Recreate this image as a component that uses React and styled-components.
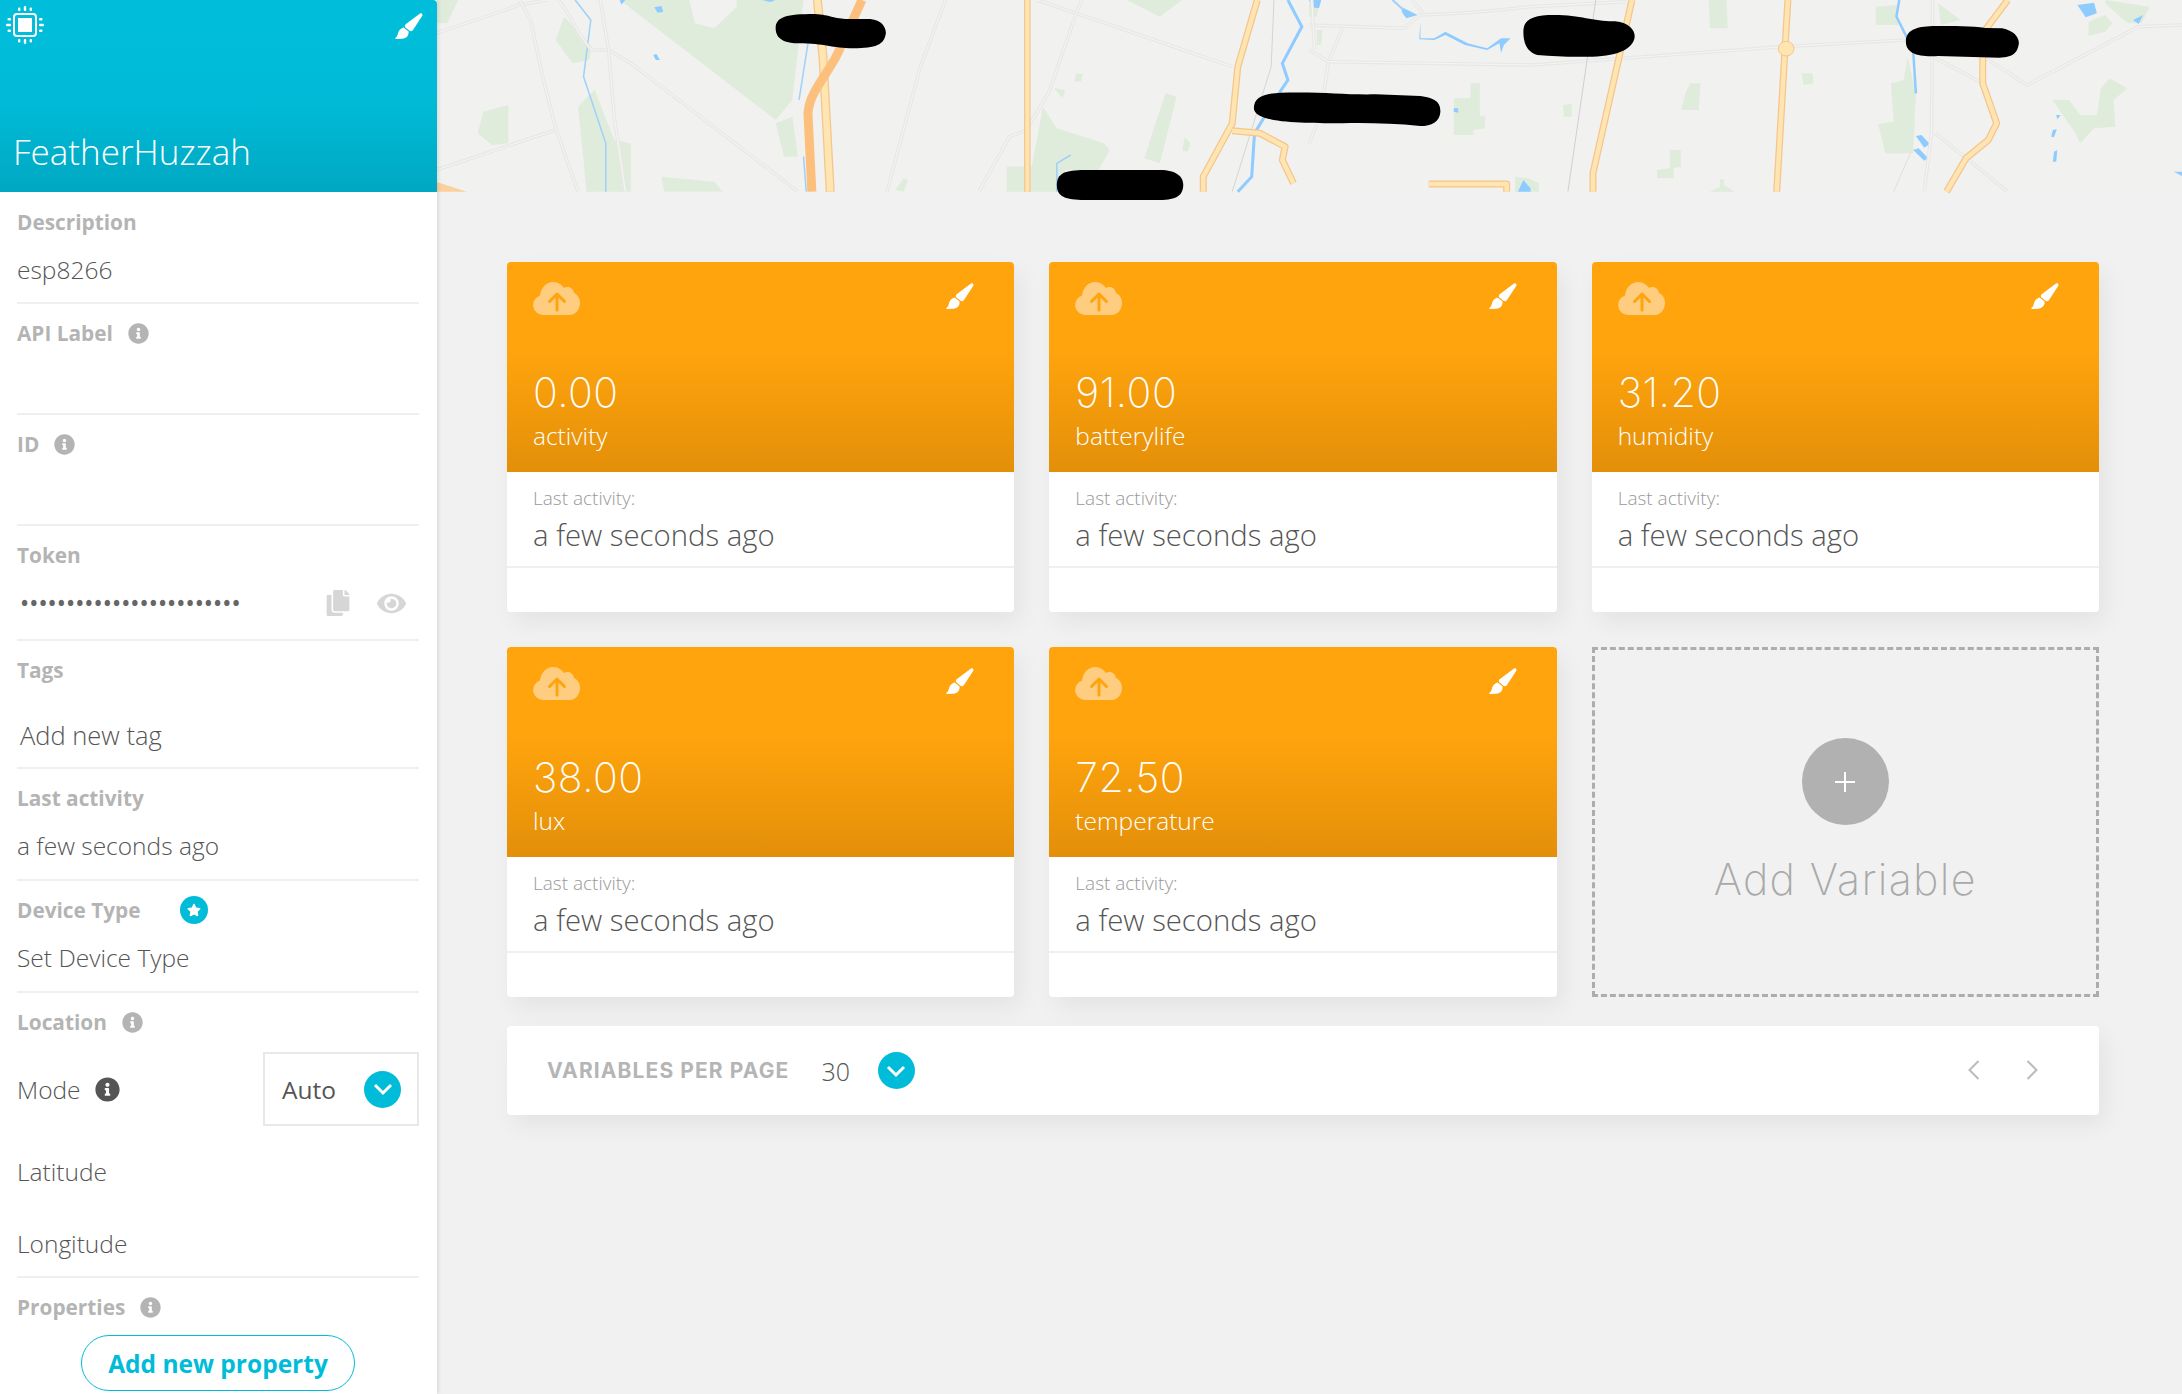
import React from 'react';
import styled, { createGlobalStyle } from 'styled-components';
import { FaInfoCircle, FaStar, FaCopy, FaEye } from 'react-icons/fa';

const GlobalStyle = createGlobalStyle`
  html, body { margin: 0; padding: 0; height: 100%; background: #f1f1f1; }
  body { font-family: "Open Sans", "Liberation Sans", sans-serif; color: #555; }
  * { box-sizing: border-box; }
`;

const Page = styled.div`
  display: flex;
  width: 2182px;
  height: 1394px;
  overflow: hidden;
  background: #f1f1f1;
`;

const Sidebar = styled.aside`
  flex: 0 0 437px;
  height: 100%;
  background: #fff;
  box-shadow: 1px 0 4px rgba(0, 0, 0, 0.12);
  z-index: 2;
  display: flex;
  flex-direction: column;
`;

const DeviceHeader = styled.header`
  flex: 0 0 192px;
  padding: 6px 14px 0 6px;
  border-top-right-radius: 4px;
  background: linear-gradient(to bottom, #00bedb 0%, #00bad6 55%, #00a8c2 100%);
  display: flex;
  flex-direction: column;
  color: #fff;
`;

const HeaderIcons = styled.div`
  display: flex;
  justify-content: space-between;
  align-items: flex-start;
`;

const BrushSvg = styled.svg`
  display: block;
  margin-top: ${(p) => p.$top || 0}px;
`;

const DeviceName = styled.h1`
  margin: auto 0 17px 7px;
  font-size: 35px;
  line-height: 46px;
  font-weight: 300;
`;

const SideBody = styled.div`
  padding: 1px 18px 0 17px;
`;

const Section = styled.section`
  height: ${(p) => p.$h}px;
  padding-top: 15px;
  border-bottom: ${(p) => (p.$last ? 'none' : '2px solid #efefef')};
`;

const LabelRow = styled.div`
  display: flex;
  align-items: center;
  gap: ${(p) => p.$gap || 15}px;
  height: 28px;
`;

const Label = styled.span`
  font-size: 20.8px;
  font-weight: 700;
  color: #b4b4b4;
`;

const Info = styled(FaInfoCircle)`
  font-size: ${(p) => p.$size || 21}px;
  color: ${(p) => p.$color || '#b4b4b4'};
`;

const StarBadge = styled.span`
  width: 28px;
  height: 28px;
  margin-left: 24px;
  border-radius: 50%;
  background: #00bcd8;
  display: flex;
  align-items: center;
  justify-content: center;
  color: #fff;
  font-size: 14px;
`;

const Value = styled.div`
  margin-top: ${(p) => p.$top || 14}px;
  margin-left: ${(p) => p.$left || 0}px;
  font-size: ${(p) => p.$size || 24.5}px;
  line-height: 40px;
  font-weight: 300;
  color: #555;
`;

const TokenRow = styled.div`
  display: flex;
  align-items: center;
  margin-top: 14px;
  height: 40px;
`;

const Dots = styled.span`
  margin-left: 4px;
  font-size: 19px;
  font-weight: 700;
  letter-spacing: 2.05px;
  color: #666;
  flex: 1;
`;

const TokenIcon = styled.span`
  display: flex;
  color: #d6d6d6;
  font-size: ${(p) => p.$size}px;
  margin-right: ${(p) => p.$right}px;
`;

const ModeRow = styled.div`
  display: flex;
  align-items: center;
  justify-content: space-between;
  margin-top: 16px;
`;

const ModeLabel = styled.div`
  display: flex;
  align-items: center;
  gap: 14px;
  font-size: 24.5px;
  font-weight: 300;
`;

const ModeSelect = styled.div`
  width: 156px;
  height: 74px;
  border: 2px solid #e8e8e8;
  padding: 0 16px 0 17px;
  display: flex;
  align-items: center;
  justify-content: space-between;
  font-size: 24.5px;
  color: #555;
`;

const Chevron = styled.span`
  width: 37px;
  height: 37px;
  border-radius: 50%;
  background: #00bcd8;
  display: flex;
  align-items: center;
  justify-content: center;
`;

const Coord = styled.div`
  margin-top: ${(p) => p.$top}px;
  font-size: 24.5px;
  line-height: 68px;
  font-weight: 300;
`;

const AddProperty = styled.button`
  display: block;
  width: 274px;
  height: 56px;
  margin: 14px 0 0 64px;
  border: 1.5px solid #00bcd8;
  border-radius: 28px;
  background: #fff;
  color: #00bcd8;
  font-family: inherit;
  font-size: 24.5px;
  font-weight: 700;
  padding: 0;
`;

const Main = styled.main`
  flex: 1;
  min-width: 0;
  display: flex;
  flex-direction: column;
`;

const MapBox = styled.div`
  height: 192px;
  background: #f1f1f0;
`;

const MapSvg = styled.svg`
  display: block;
  overflow: visible;
  width: 1745px;
  height: 192px;
`;

const Content = styled.div`
  padding: 70px 83px 0 70px;
`;

const Grid = styled.div`
  display: grid;
  grid-template-columns: repeat(3, 1fr);
  grid-auto-rows: 350px;
  gap: 35px;
`;

const Card = styled.article`
  border-radius: 4px;
  background: #fff;
  overflow: hidden;
  box-shadow: 6px 10px 24px rgba(0, 0, 0, 0.06);
  display: flex;
  flex-direction: column;
`;

const CardHead = styled.div`
  height: 210px;
  padding: 20px 40px 0 26px;
  background: linear-gradient(to bottom, #ffa40d 0%, #ffa40d 42%, #e38f09 100%);
  color: #fff;
`;

const CardIcons = styled.div`
  display: flex;
  justify-content: space-between;
  align-items: flex-start;
  height: 80px;
`;

const Reading = styled.div`
  font-family: Inter, "Open Sans", sans-serif;
  font-size: 41px;
  line-height: 50px;
  font-weight: 200;
  letter-spacing: 0.5px;
  margin-top: 5px;
`;

const VarName = styled.div`
  font-size: 24.5px;
  line-height: 34px;
  font-weight: 300;
  margin-top: 2px;
`;

const CardBody = styled.div`
  height: 96px;
  padding: 13px 26px 0;
  border-bottom: 2px solid #efefef;
`;

const ActivityLabel = styled.div`
  font-size: 19px;
  line-height: 27px;
  font-weight: 300;
  color: #999;
`;

const ActivityValue = styled.div`
  margin-top: 3px;
  font-size: 29.3px;
  line-height: 40px;
  font-weight: 300;
  color: #555;
`;

const AddCard = styled.div`
  border: 3px dashed #adadad;
  display: flex;
  flex-direction: column;
  align-items: center;
  padding-top: 88px;
`;

const AddCircle = styled.div`
  width: 87px;
  height: 87px;
  border-radius: 50%;
  background: #b1b1b1;
  color: #fff;
  display: flex;
  align-items: center;
  justify-content: center;
`;

const AddLabel = styled.div`
  margin-top: 28px;
  font-family: Inter, "Open Sans", sans-serif;
  font-size: 43px;
  line-height: 52px;
  font-weight: 200;
  letter-spacing: 1.3px;
  color: #a9a9a9;
`;

const Pager = styled.div`
  height: 89px;
  margin-top: 29px;
  padding: 0 61px 0 40px;
  border-radius: 4px;
  background: #fff;
  box-shadow: 6px 10px 24px rgba(0, 0, 0, 0.06);
  display: flex;
  align-items: center;
`;

const PagerLabel = styled.span`
  font-family: Inter, "Open Sans", sans-serif;
  font-size: 21px;
  font-weight: 700;
  letter-spacing: 1.1px;
  color: #b5b5b5;
`;

const PagerValue = styled.span`
  margin: 0 28px 0 32px;
  font-size: 25px;
  font-weight: 300;
  color: #555;
`;

const PagerArrows = styled.div`
  margin-left: auto;
  display: flex;
  gap: 46px;
  margin-top: -2px;
`;

const BrushIcon = ({ top }) => (
  <BrushSvg $top={top} width="28" height="26" viewBox="0 0 28 26" fill="#fff">
    <path d="M25 .5c1.5-.8 3 .6 2.3 2.2L18 17c-1 1.4-2.5 1.5-3.5.7l-4-3.2c-1-.9-.9-2.3.2-3.3z" />
    <path d="M8.6 14.4l5 4c.3 3.8-2 7-6.5 7.4L1 26c-.8 0-1-.8-.5-1.2 2-1.2 2-3 2.7-5.3.8-2.7 3-4.6 5.4-5.1z" />
  </BrushSvg>
);

const CloudIcon = () => (
  <svg width="47" height="33" viewBox="0 0 47 33">
    <path fill="#ffcd80" d="M10 33a10 10 0 0 1-3-19.5C8 5 14 0 20 0c5 0 9 3 11 6 3-2 9-1 10 5 4 2 6 6 6 10 0 7-5 12-10 12z" />
    <path d="M24 28V13M16.5 19.5L24 12l7.5 7.5" fill="none" stroke="#ffa40d" strokeWidth="3" strokeLinecap="round" strokeLinejoin="round" />
  </svg>
);

const ChevronMark = () => (
  <svg width="20" height="14" viewBox="0 0 20 14">
    <path d="M2 3l8 8 8-8" fill="none" stroke="#fff" strokeWidth="3" />
  </svg>
);

const ChipIcon = () => (
  <svg width="38" height="38" viewBox="0 0 38 38" fill="#fff">
    <path fillRule="evenodd" d="M11 7h16a4 4 0 0 1 4 4v16a4 4 0 0 1-4 4H11a4 4 0 0 1-4-4V11a4 4 0 0 1 4-4zm0 2a2 2 0 0 0-2 2v16a2 2 0 0 0 2 2h16a2 2 0 0 0 2-2V11a2 2 0 0 0-2-2z" />
    <rect x="12" y="12" width="14" height="14" />
    <rect x="12" y="1.5" width="2.4" height="3.5" rx="1" />
    <rect x="17.8" y="0" width="2.4" height="5" rx="1" />
    <rect x="23.6" y="1.5" width="2.4" height="3.5" rx="1" />
    <rect x="12" y="33" width="2.4" height="3.5" rx="1" />
    <rect x="17.8" y="33" width="2.4" height="5" rx="1" />
    <rect x="23.6" y="33" width="2.4" height="3.5" rx="1" />
    <rect x="1.5" y="12" width="3.5" height="2.4" rx="1" />
    <rect x="0" y="17.8" width="5" height="2.4" rx="1" />
    <rect x="1.5" y="23.6" width="3.5" height="2.4" rx="1" />
    <rect x="33" y="12" width="3.5" height="2.4" rx="1" />
    <rect x="33" y="17.8" width="5" height="2.4" rx="1" />
    <rect x="33" y="23.6" width="3.5" height="2.4" rx="1" />
  </svg>
);

const Arrow = ({ flip }) => (
  <svg width="12" height="20" viewBox="0 0 12 20">
    <path d={flip ? 'M1.5 1l9 9-9 9' : 'M10.5 1l-9 9 9 9'} fill="none" stroke="#bbb" strokeWidth="2" />
  </svg>
);

const Road = ({ d }) => (
  <g fill="none" strokeLinejoin="round">
    <path d={d} stroke="#e7e7e6" strokeWidth="3.5" vectorEffect="non-scaling-stroke" />
    <path d={d} stroke="#f4f4f3" strokeWidth="1.2" vectorEffect="non-scaling-stroke" />
  </g>
);

const Highway = ({ d, w = 7 }) => (
  <g fill="none" strokeLinejoin="round">
    <path d={d} stroke="#f6c48d" strokeWidth={w} vectorEffect="non-scaling-stroke" />
    <path d={d} stroke="#ffe5b0" strokeWidth={w - 2.5} vectorEffect="non-scaling-stroke" />
  </g>
);

const Thin = ({ d, color = '#9fd0fa', w = 1.5 }) => (
  <path d={d} fill="none" stroke={color} strokeWidth={w} vectorEffect="non-scaling-stroke" />
);

// coordinates below were read off the two map crops, hence the scaled groups
const MapDrawing = () => (
  <MapSvg viewBox="437 0 1745 192">
    <g transform="translate(436 0) scale(0.5568 0.3333)">
      <g fill="#e0ecdb">
        <path d="M330 0L455 0L465 70L500 85L540 20L540 0L660 0L640 300L610 360Z" />
        <path d="M610 370L640 350L650 470L625 470Z" />
        <path d="M215 120L230 50L280 140L275 180L245 190Z" />
        <path d="M255 320L285 270L320 420L350 430L350 575L270 575L265 480Z" />
        <path d="M85 335L130 315L130 430L100 435L75 400Z" />
        <path d="M405 530L500 545L515 575L410 575Z" />
        <path d="M1090 320L1115 385L1200 430L1210 450L1190 510L1130 510L1120 575L1025 575L1025 500L1070 500Z" />
        <path d="M1110 265L1130 270L1125 295ZM1150 220L1162 222L1158 245L1146 243Z" />
        <path d="M1310 280L1330 290L1300 490L1272 475ZM1345 410L1355 430L1350 455L1340 450Z" />
        <path d="M0 0L40 0L20 70L0 70ZM1240 0L1340 0L1300 50ZM825 570L840 535L848 540L840 575Z" />
      </g>
      <path d="M0 545L55 575L0 575Z" fill="#fbd09c" />
      <g fill="#8ecbff">
        <path d="M392 22L405 18L408 35L398 38ZM390 165L396 162L402 180L395 180ZM330 0L340 0L333 14ZM585 0L610 0L600 6Z" />
      </g>
      <Thin d="M250 0L278 60L265 230L305 430L305 575" />
      <Thin d="M668 130L652 300M660 470L665 575M1140 465L1115 490L1115 575" />
      <Thin d="M1530 0L1555 80L1520 190L1530 240L1510 290L1470 400L1465 530L1440 575" w="3" color="#8ecbff" />
      <Road d="M0 100L150 15L200 0" />
      <Road d="M150 0L170 60L190 220L215 385L255 575" />
      <Road d="M220 0C240 40 260 120 280 150L310 150L350 190L650 575" />
      <Road d="M295 0L310 150L320 350L340 575" />
      <Road d="M0 510L215 390" />
      <Road d="M915 0L870 200L810 575" />
      <Road d="M1080 0L1430 200" />
      <Road d="M1160 0L1150 40L1100 280L1060 390L1030 410L975 575" />
      <Thin d="M1505 0L1500 200L1430 575" color="#d4d4d4" w="1" />
      <Highway d="M685 0L695 170L708 575" w="9" />
      <path d="M765 0L720 165C700 230 670 280 668 340L675 575" fill="none" stroke="#fcc07c" strokeWidth="9" vectorEffect="non-scaling-stroke" />
      <Highway d="M1062 0L1062 575" w="6.5" />
      <Highway d="M1475 0L1440 200L1430 370L1378 530L1378 575" w="7" />
      <Highway d="M1430 392L1480 400L1525 440L1520 480L1540 550" w="7" />
    </g>
    <g transform="translate(1309 0) scale(0.5568 0.3333)">
      <g fill="#e0ecdb">
        <path d="M718 0L750 0L752 85L720 85ZM1018 20L1055 15L1058 75L1018 75ZM1130 10L1170 60L1135 75Z" />
        <path d="M260 295L290 295L290 250L307 250L307 348L317 350L315 385L295 390L295 405L260 405Z" />
        <path d="M456 315L472 312L472 350L458 350ZM885 220L905 220L906 252L888 254Z" />
        <path d="M685 250L703 250L700 330L668 330L677 275Z" />
        <path d="M648 450L668 450L668 500L655 505L655 535L625 535L625 510L648 505Z" />
        <path d="M738 538L745 538L745 555L765 575L720 575L738 560Z" />
        <path d="M1045 250L1068 240L1075 170L1090 280L1085 460L1035 460L1022 372L1050 365Z" />
        <path d="M1335 300L1365 300L1385 345L1415 345L1422 265L1438 235L1470 265L1445 300L1448 380L1410 385L1385 430L1375 395Z" />
        <path d="M1430 0L1510 20L1495 70L1470 70L1430 10ZM1400 65L1430 45L1443 70L1430 95L1400 108Z" />
        <path d="M370 530L395 535L413 550L413 575L370 575ZM0 10L18 10L14 50L0 50ZM14 90L24 90L22 135L14 135Z" />
      </g>
      <g fill="#8ecbff">
        <path d="M165 20L195 45L175 55L168 40ZM0 0L22 0L18 25L5 22Z" />
        <path d="M200 62L200 115L225 115L245 95L285 130L320 145L345 115L362 115L350 135L345 158L342 130L320 150L280 135L245 105L225 120L198 118Z" />
        <path d="M1380 15L1410 8L1415 40L1395 52ZM1480 60L1498 45L1490 72ZM1090 408L1100 405L1115 432L1105 443ZM1085 450L1095 445L1112 475L1105 482Z" />
        <path d="M1342 345L1350 345L1344 358ZM1336 390L1343 388L1338 412L1333 410ZM1338 455L1344 450L1342 485L1336 485Z" />
        <path d="M375 575L385 540L398 565L398 575ZM260 325L268 325L268 338L260 335ZM1553 515L1568 515L1568 528Z" />
      </g>
      <Thin d="M150 0L170 30" w="2" />
      <Thin d="M1060 0L1055 50L1085 150L1090 280" w="2.5" color="#8ecbff" />
      <Road d="M0 75L170 85L200 45C300 40 340 30 400 20L570 5" />
      <Road d="M185 0L205 40" />
      <Road d="M60 85L35 185L20 350L0 430" />
      <Road d="M35 185L0 150M5 0L10 150" />
      <Road d="M35 185L400 195L850 140L1070 120" />
      <Road d="M1120 170L1210 250" />
      <Road d="M1210 170L1290 255L1490 80L1568 75" />
      <Road d="M1125 400L1255 575" />
      <Road d="M1120 0L1118 400L1105 575" />
      <Thin d="M515 0L465 575" color="#cfcfcf" w="1" />
      <Thin d="M1080 460L1050 575" color="#dfdfdf" w="1" />
      <Highway d="M580 0L510 520L510 575" w="7" />
      <Highway d="M860 0L840 575" w="7" />
      <ellipse cx="857" cy="146" rx="14" ry="22" fill="#ffe5b0" stroke="#f6c48d" strokeWidth="1" vectorEffect="non-scaling-stroke" />
      <Highway d="M1255 0L1210 100L1210 250L1235 370L1220 420L1180 475L1145 575" w="7" />
      <Highway d="M215 552L355 552L355 575" w="7" />
    </g>
    {/* redaction scribbles from the screenshot */}
    <g fill="#000">
      <path transform="translate(436 0) scale(0.5568 0.3333)" d="M610 85C610 50 630 42 680 42C710 45 715 57 740 57L780 57C800 60 808 80 808 100C805 135 790 145 750 145C710 145 700 130 650 130C620 130 610 110 610 85Z" />
      <path transform="translate(436 0) scale(0.5568 0.3333)" d="M1115 555C1115 520 1130 510 1165 510L1300 510C1330 510 1342 530 1342 555C1342 585 1330 600 1300 600L1165 600C1130 600 1115 590 1115 555Z" />
      <path transform="translate(1309 0) scale(0.5568 0.3333)" d="M-99 325C-99 290 -80 280 -50 278C30 275 60 285 120 283L200 288C230 295 236 310 236 335C235 365 220 378 200 378C150 370 100 368 60 370C0 368 -99 372 -99 325Z" />
      <path transform="translate(1309 0) scale(0.5568 0.3333)" d="M385 95C385 55 405 45 440 45C490 45 510 65 550 64C575 68 585 90 585 110C582 150 550 170 500 170C470 172 440 168 410 165C390 155 385 125 385 95Z" />
      <path transform="translate(1309 0) scale(0.5568 0.3333)" d="M1072 125C1072 90 1090 80 1120 78C1160 78 1190 78 1215 84L1245 85C1265 92 1275 110 1275 130C1272 160 1265 172 1240 173L1130 168C1095 172 1072 160 1072 125Z" />
    </g>
  </MapSvg>
);

const variables = [
  { value: '0.00', name: 'activity' },
  { value: '91.00', name: 'batterylife' },
  { value: '31.20', name: 'humidity' },
  { value: '38.00', name: 'lux' },
  { value: '72.50', name: 'temperature' }
];

const VariableCard = ({ value, name }) => (
  <Card>
    <CardHead>
      <CardIcons>
        <CloudIcon />
        <BrushIcon top={1} />
      </CardIcons>
      <Reading>{value}</Reading>
      <VarName>{name}</VarName>
    </CardHead>
    <CardBody>
      <ActivityLabel>Last activity:</ActivityLabel>
      <ActivityValue>a few seconds ago</ActivityValue>
    </CardBody>
  </Card>
);

export default function App() {
  return (
    <Page>
      <GlobalStyle />
      <Sidebar>
        <DeviceHeader>
          <HeaderIcons>
            <ChipIcon />
            <BrushIcon top={7} />
          </HeaderIcons>
          <DeviceName>FeatherHuzzah</DeviceName>
        </DeviceHeader>
        <SideBody>
          <Section $h={111}>
            <LabelRow><Label>Description</Label></LabelRow>
            <Value>esp8266</Value>
          </Section>
          <Section $h={111}>
            <LabelRow><Label>API Label</Label><Info /></LabelRow>
          </Section>
          <Section $h={111}>
            <LabelRow><Label>ID</Label><Info /></LabelRow>
          </Section>
          <Section $h={115}>
            <LabelRow><Label>Token</Label></LabelRow>
            <TokenRow>
              <Dots>••••••••••••••••••••••••</Dots>
              <TokenIcon $size={26} $right={26}><FaCopy /></TokenIcon>
              <TokenIcon $size={29} $right={13}><FaEye /></TokenIcon>
            </TokenRow>
          </Section>
          <Section $h={128}>
            <LabelRow><Label>Tags</Label></LabelRow>
            <Value $top={31} $left={3} $size={25.5}>Add new tag</Value>
          </Section>
          <Section $h={112}>
            <LabelRow><Label>Last activity</Label></LabelRow>
            <Value>a few seconds ago</Value>
          </Section>
          <Section $h={112}>
            <LabelRow $gap={0}><Label>Device Type</Label><StarBadge><FaStar /></StarBadge></LabelRow>
            <Value>Set Device Type</Value>
          </Section>
          <Section $h={285}>
            <LabelRow><Label>Location</Label><Info /></LabelRow>
            <ModeRow>
              <ModeLabel>Mode<Info $size={25} $color="#555" /></ModeLabel>
              <ModeSelect>Auto<Chevron><ChevronMark /></Chevron></ModeSelect>
            </ModeRow>
            <Coord $top={12}>Latitude</Coord>
            <Coord $top={4}>Longitude</Coord>
          </Section>
          <Section $h={116} $last>
            <LabelRow><Label>Properties</Label><Info /></LabelRow>
            <AddProperty>Add new property</AddProperty>
          </Section>
        </SideBody>
      </Sidebar>
      <Main>
        <MapBox><MapDrawing /></MapBox>
        <Content>
          <Grid>
            {variables.map((v) => (
              <VariableCard key={v.name} value={v.value} name={v.name} />
            ))}
            <AddCard>
              <AddCircle>
                <svg width="22" height="22" viewBox="0 0 22 22">
                  <path d="M11 1v20M1 11h20" stroke="#fff" strokeWidth="2" />
                </svg>
              </AddCircle>
              <AddLabel>Add Variable</AddLabel>
            </AddCard>
          </Grid>
          <Pager>
            <PagerLabel>VARIABLES PER PAGE</PagerLabel>
            <PagerValue>30</PagerValue>
            <Chevron><ChevronMark /></Chevron>
            <PagerArrows>
              <Arrow />
              <Arrow flip />
            </PagerArrows>
          </Pager>
        </Content>
      </Main>
    </Page>
  );
}
